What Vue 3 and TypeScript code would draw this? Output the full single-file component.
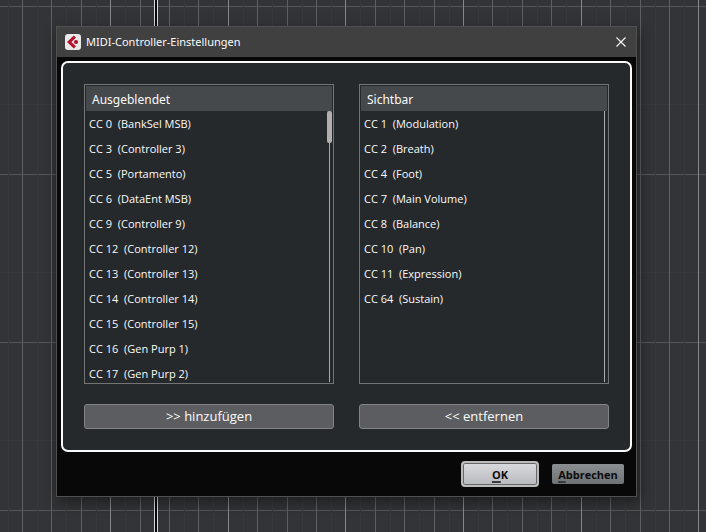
<script setup lang="ts">
interface Controller {
  cc: number
  name: string
}

interface Panel {
  id: string
  title: string
  action: string
  scrollable: boolean
  items: Controller[]
}

const panels: Panel[] = [
  {
    id: 'hidden',
    title: 'Ausgeblendet',
    action: '>> hinzufügen',
    scrollable: true,
    items: [
      { cc: 0, name: 'BankSel MSB' },
      { cc: 3, name: 'Controller 3' },
      { cc: 5, name: 'Portamento' },
      { cc: 6, name: 'DataEnt MSB' },
      { cc: 9, name: 'Controller 9' },
      { cc: 12, name: 'Controller 12' },
      { cc: 13, name: 'Controller 13' },
      { cc: 14, name: 'Controller 14' },
      { cc: 15, name: 'Controller 15' },
      { cc: 16, name: 'Gen Purp 1' },
      { cc: 17, name: 'Gen Purp 2' },
    ],
  },
  {
    id: 'visible',
    title: 'Sichtbar',
    action: '<< entfernen',
    scrollable: false,
    items: [
      { cc: 1, name: 'Modulation' },
      { cc: 2, name: 'Breath' },
      { cc: 4, name: 'Foot' },
      { cc: 7, name: 'Main Volume' },
      { cc: 8, name: 'Balance' },
      { cc: 10, name: 'Pan' },
      { cc: 11, name: 'Expression' },
      { cc: 64, name: 'Sustain' },
    ],
  },
]

// Piano-roll grid behind the dialog: a bar is four beats, each beat has a faint half.
const beats = Array.from({ length: 80 }, (_, i) => ({
  x: Math.round(-7.5 + i * 29.41),
  half: Math.round(7.5 + i * 29.41),
  bar: i % 4 === 0,
}))
const rows = Array.from({ length: 12 }, (_, i) => 6 + i * 168)
</script>

<template>
  <div class="editor">
    <svg class="grid" aria-hidden="true" shape-rendering="crispEdges">
      <rect v-for="y in rows" :key="'f' + y" x="0" :y="y + 98" width="100%" height="1" fill="#39393c" />
      <rect v-for="y in rows" :key="'r' + y" x="0" :y="y" width="100%" height="1" fill="#565659" />
      <rect v-for="b in beats" :key="'h' + b.x" :x="b.half" y="0" width="1" height="100%" fill="#39393c" />
      <rect v-for="b in beats" :key="'b' + b.x" :x="b.x" y="0" width="1" height="100%" :fill="b.bar ? '#87878a' : '#606063'" />
      <rect x="154" y="0" width="4" height="100%" fill="#08090a" />
      <rect x="154" y="0" width="1" height="100%" fill="#d6dadd" />
      <rect x="157" y="0" width="1" height="100%" fill="#d6dadd" />
    </svg>

    <section class="dialog" role="dialog" aria-labelledby="dialog-title">
      <header class="titlebar">
        <svg class="logo" viewBox="0 0 16 16" aria-hidden="true">
          <rect width="16" height="16" rx="3" fill="#e9e9ea" />
          <path d="M8.8 1.6 11 3.8 6.4 8 11 12.2 8.8 14.4 2 8Z" fill="#b3132f" />
          <circle cx="11" cy="8" r="2.1" fill="#a5152f" />
        </svg>
        <h1 id="dialog-title">MIDI-Controller-Einstellungen</h1>
        <button class="close" type="button" aria-label="Schließen">
          <svg viewBox="0 0 10 10" aria-hidden="true">
            <path d="M.5.5 9.5 9.5M9.5.5.5 9.5" stroke="#f4f4f4" stroke-width="1.2" />
          </svg>
        </button>
      </header>

      <main class="frame">
        <div v-for="p in panels" :key="p.id" class="column">
          <div class="box">
            <h2 :id="p.id">{{ p.title }}</h2>
            <div class="body">
              <ul :aria-labelledby="p.id">
                <li v-for="c in p.items" :key="c.cc">{{ `CC ${c.cc}  (${c.name})` }}</li>
              </ul>
              <div class="track">
                <div v-if="p.scrollable" class="thumb"></div>
              </div>
            </div>
          </div>
          <button class="move" type="button">{{ p.action }}</button>
        </div>
      </main>

      <footer class="actions">
        <button class="ok" type="button"><span><u>O</u>K</span></button>
        <button class="cancel" type="button"><span><u>A</u>bbrechen</span></button>
      </footer>
    </section>
  </div>
</template>

<style>
body {
  background: #333437;
}
</style>

<style scoped>
.editor {
  position: relative;
  box-sizing: border-box;
  min-height: 100vh;
  padding: 26px 69px 35px 56px;
  overflow: hidden;
  font-family: "Open Sans", "Noto Sans", sans-serif;
  color: #fafafa;
}

.grid {
  position: absolute;
  inset: 0;
  width: 100%;
  height: 100%;
}

.dialog {
  position: relative;
  border: 1px solid #505050;
  background: #080808;
  box-shadow: 2px 5px 14px rgba(0, 0, 0, 0.45);
}

.titlebar {
  display: flex;
  align-items: center;
  height: 30px;
  padding: 0 7px 0 8px;
  background: #404040;
}

.logo {
  width: 16px;
  height: 16px;
}

h1,
h2 {
  font-family: "Noto Sans", "Open Sans", sans-serif;
  font-weight: 400;
}

h1 {
  flex: 1;
  margin: 0 0 0 5px;
  font-size: 11px;
  line-height: 16px;
  white-space: nowrap;
}

button {
  font-family: inherit;
  cursor: pointer;
}

.close {
  display: flex;
  align-items: center;
  justify-content: center;
  width: 16px;
  height: 16px;
  padding: 0;
  border: 0;
  background: none;
}

.close svg {
  width: 10px;
  height: 10px;
}

.frame {
  display: flex;
  gap: 25px;
  margin: 4px 4px 0;
  padding: 21px;
  border: 2px solid #fafafa;
  border-radius: 7px;
  background: #25292c;
}

.column {
  display: flex;
  flex: 1;
  flex-direction: column;
  gap: 20px;
  min-width: 0;
}

.box {
  box-sizing: border-box;
  display: flex;
  flex-direction: column;
  height: 300px;
  padding: 1px;
  border: 1px solid #727475;
}

h2 {
  margin: 0;
  padding: 2px 6px 0;
  background: #45494b;
  font-size: 12px;
  line-height: 23px;
}

.body {
  display: flex;
  flex: 1;
  min-height: 0;
  overflow: hidden;
}

ul {
  flex: 1;
  margin: 0;
  padding: 0 3px;
  list-style: none;
}

li {
  font-size: 11px;
  line-height: 25px;
  white-space: pre;
}

.track {
  width: 5px;
  background: linear-gradient(#aaa, #aaa) center / 1px 100% no-repeat;
}

.thumb {
  height: 32px;
  border-radius: 2px;
  background: #b3afaf;
}

.move {
  height: 25px;
  padding: 0 0 2px;
  border: 1px solid #828385;
  border-radius: 3px;
  background: #5c5d60;
  color: #fafafa;
  font-size: 13px;
  line-height: 20px;
}

.actions {
  display: flex;
  align-items: center;
  justify-content: flex-end;
  gap: 13px;
  padding: 9px 12px;
}

.actions button {
  padding: 2px 0 0;
  color: #0c0c0c;
  font-size: 11px;
  font-weight: 700;
  line-height: 16px;
}

.actions u {
  text-decoration-color: #3a3a3a;
  text-decoration-thickness: 2px;
  text-underline-offset: 2px;
  text-decoration-skip-ink: none;
}

.ok {
  width: 78px;
  height: 26px;
  border: 2px solid #bcbcbc;
  border-radius: 4px;
  background: linear-gradient(#d8dbdf, #b9babd);
  box-shadow: inset 0 0 0 1px #66686a;
}

.cancel {
  width: 72px;
  height: 20px;
  border: 0;
  border-radius: 2px;
  background: linear-gradient(#8b8e91, #6f7275);
}
</style>
